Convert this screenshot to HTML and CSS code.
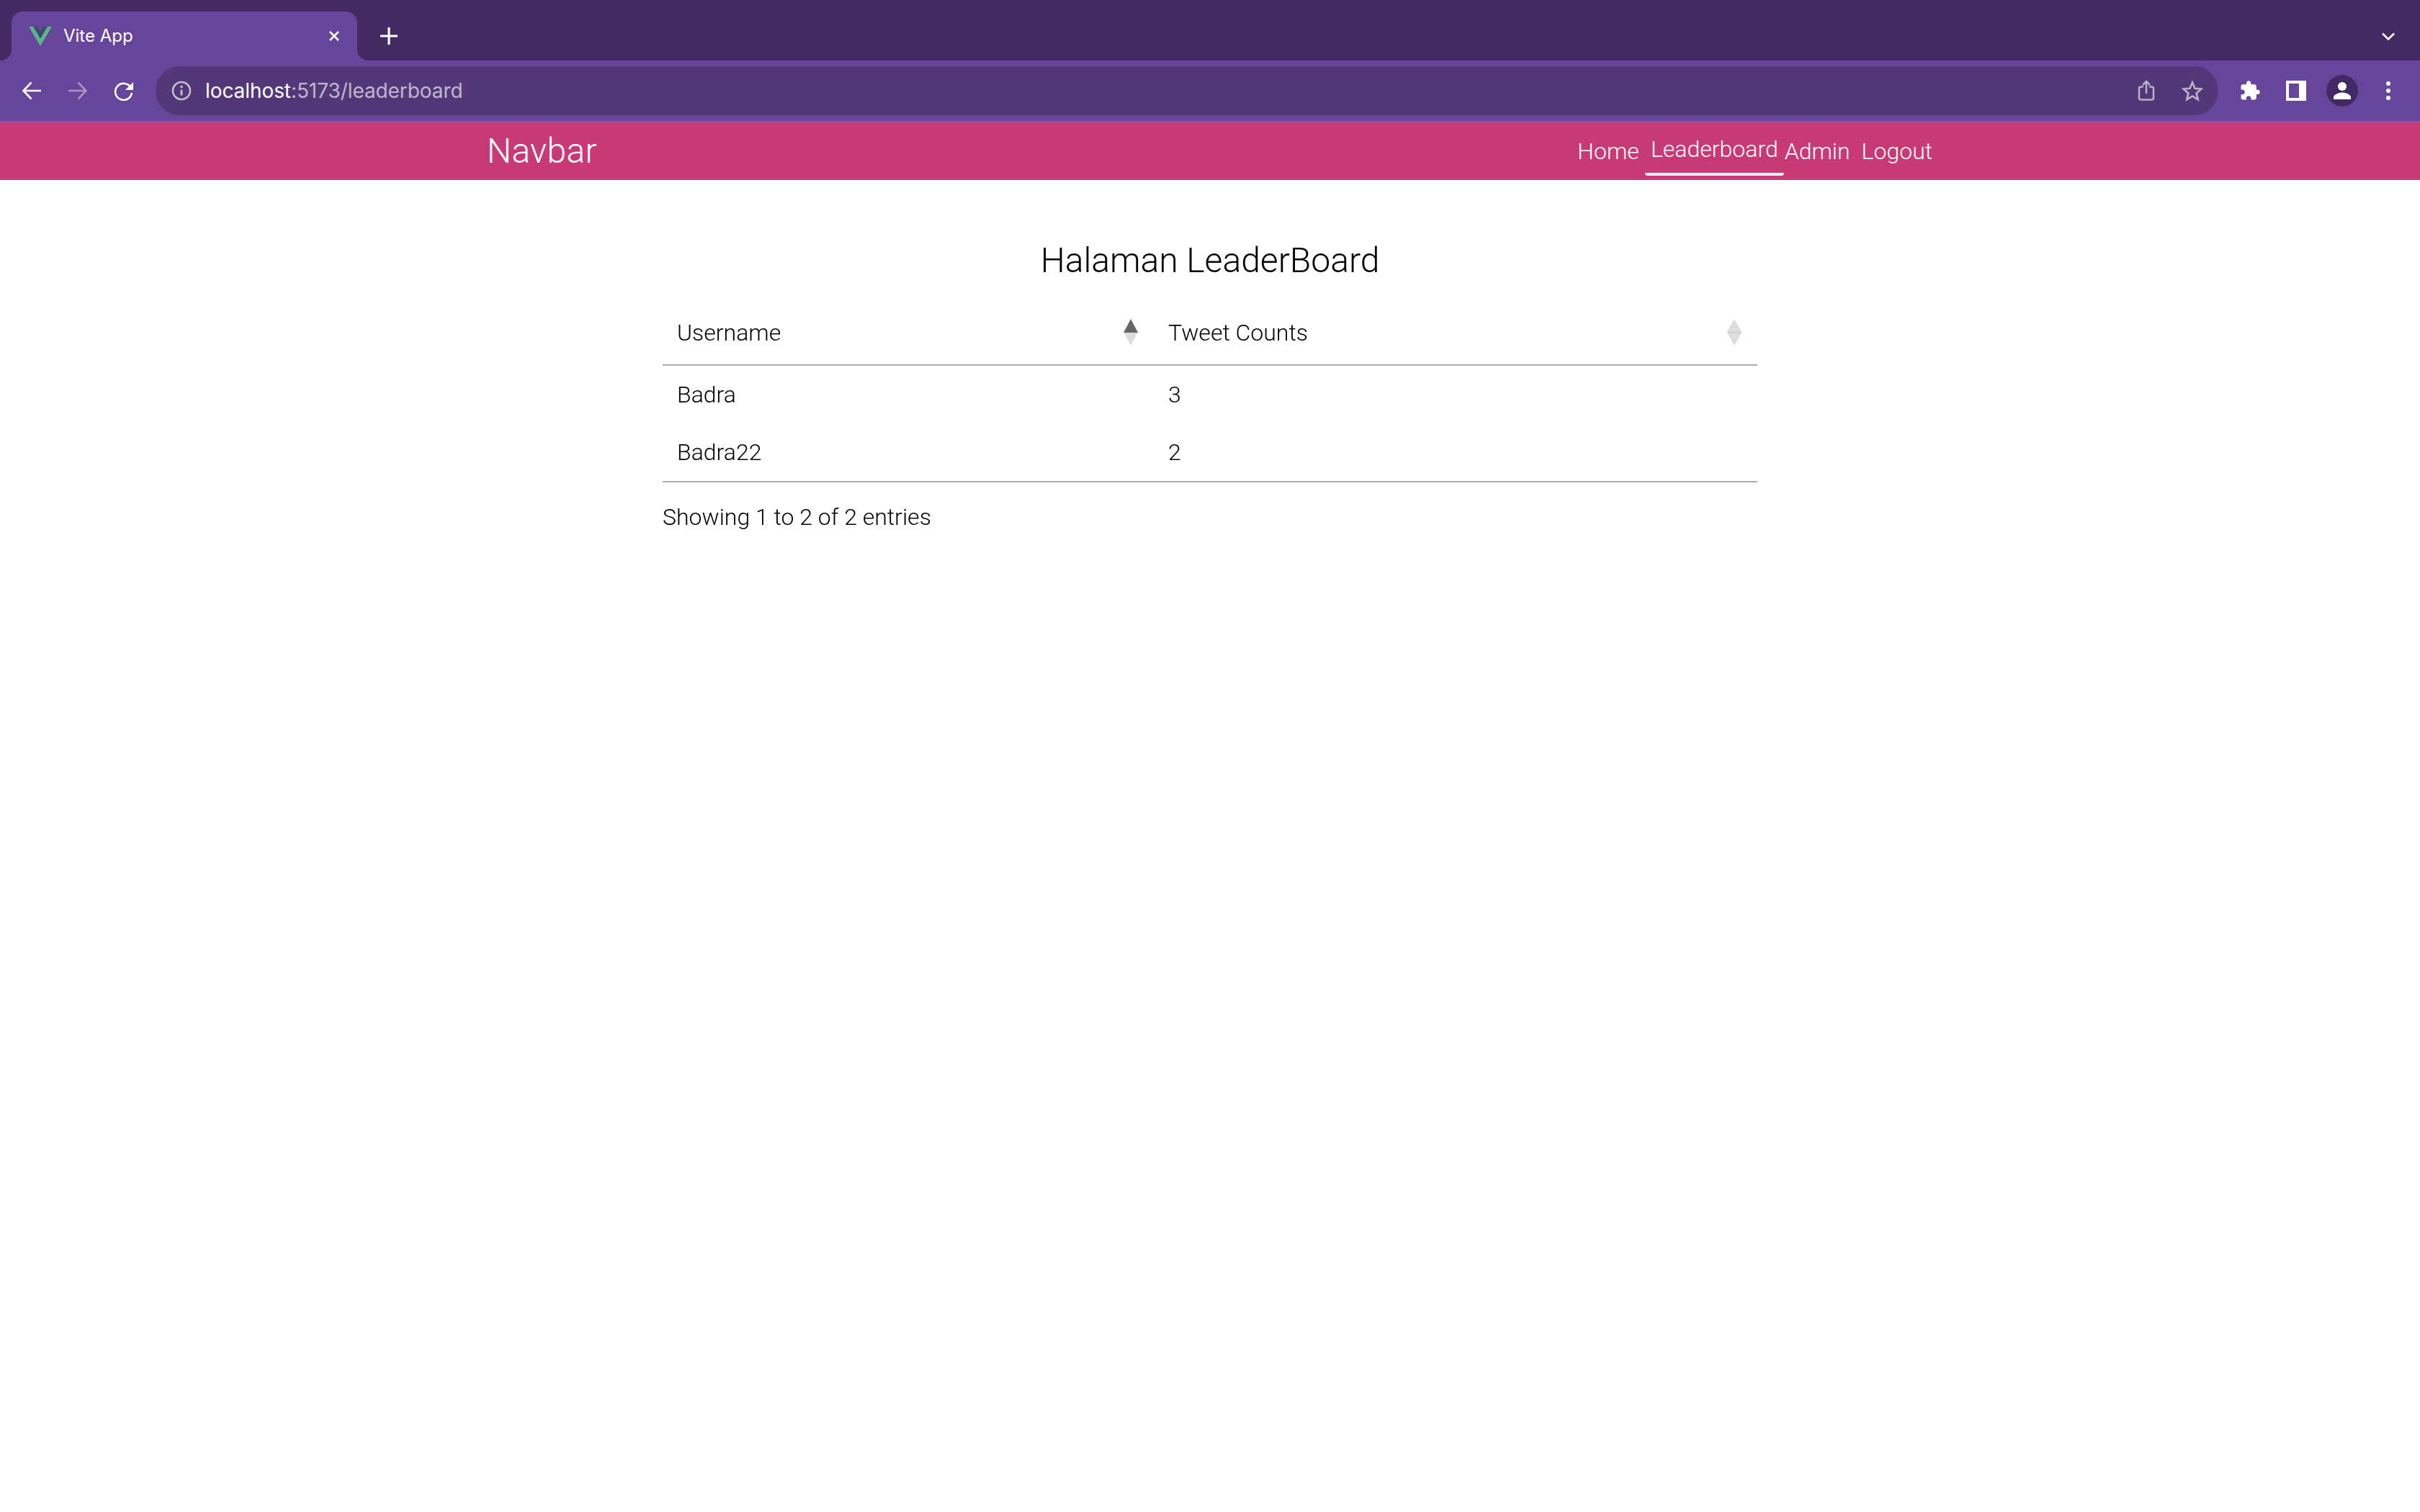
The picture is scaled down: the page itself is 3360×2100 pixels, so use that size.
FILE: index.html
```html
<!DOCTYPE html>
<html lang="en">
<head>
    <meta charset="UTF-8">
    <title>Vite App</title>
    <link rel="stylesheet" href="styles.css">
</head>
<body>
    <!-- Browser tab strip -->
    <div class="tabstrip">
        <div class="tab">
            <svg class="tab-logo" viewBox="0 0 32 27" width="32" height="27">
                <path fill="#5bb58a" d="M0 0h6.4L16 16.6 25.6 0H32L16 27z"/>
                <path fill="#3c4a6d" d="M6.4 0h5.8L16 6.6 19.8 0h5.8L16 16.6z"/>
            </svg>
            <span class="tab-title">Vite App</span>
            <svg class="tab-close" viewBox="0 0 16 16" width="16" height="16">
                <path d="M2 2l12 12M14 2L2 14" stroke="#fff" stroke-width="2.6" fill="none"/>
            </svg>
        </div>
        <svg class="new-tab" viewBox="0 0 24 24" width="24" height="24">
            <path d="M12 0v24M0 12h24" stroke="#fff" stroke-width="3.2" fill="none"/>
        </svg>
        <svg class="tab-menu" viewBox="0 0 18 11" width="18" height="11">
            <path d="M1 1.5l8 8 8-8" stroke="#fff" stroke-width="2.6" fill="none"/>
        </svg>
    </div>

    <!-- Browser toolbar -->
    <div class="toolbar">
        <div class="tool">
            <svg viewBox="0 0 28 26" width="28" height="26">
                <path d="M27 13H3M13.5 1.5L2.5 13l11 11.5" stroke="#fff" stroke-width="2.6" fill="none"/>
            </svg>
        </div>
        <div class="tool">
            <svg viewBox="0 0 28 26" width="28" height="26">
                <path d="M1 13h24M14.500 1.500L25.500 13l-11 11.500" stroke="#a994c8" stroke-width="2.6" fill="none"/>
            </svg>
        </div>
        <div class="tool">
            <svg viewBox="0 0 28 28" width="28" height="28">
                <path d="M23.500 9.500A11.500 11.500 0 1 0 25 17" stroke="#fff" stroke-width="2.6" fill="none"/>
                <path d="M27 2v11H16z" fill="#fff"/>
            </svg>
        </div>
        <div class="omnibox">
            <svg class="info-icon" viewBox="0 0 28 28" width="28" height="28">
                <circle cx="14" cy="14" r="12" stroke="#c3bdce" stroke-width="2.6" fill="none"/>
                <path d="M14 12.500v8" stroke="#c3bdce" stroke-width="2.8" fill="none"/>
                <circle cx="14" cy="8.500" r="1.800" fill="#c3bdce"/>
            </svg>
            <span class="url"><span class="url-host">localhost</span>:5173/leaderboard</span>
            <div class="tool">
                <svg viewBox="0 0 24 30" width="24" height="30">
                    <path d="M8 9.500H4.500a2.500 2.500 0 0 0-2.500 2.500v13a2.500 2.500 0 0 0 2.500 2.500h15a2.500 2.500 0 0 0 2.500-2.500V12a2.500 2.500 0 0 0-2.500-2.500H16M12 19V2.500M7 7l5-5 5 5" stroke="#b9b4c2" stroke-width="2.500" fill="none"/>
                </svg>
            </div>
            <div class="tool">
                <svg viewBox="0 0 30 30" width="30" height="30">
                    <path d="M15 3.500l3.500 8.300 9 .7-6.900 5.900 2.100 8.800-7.700-4.700-7.700 4.700 2.100-8.800-6.900-5.900 9-.7z" stroke="#b9b4c2" stroke-width="2.600" fill="none"/>
                </svg>
            </div>
            <span class="omnibox-end"></span>
        </div>
        <div class="tool">
            <svg viewBox="0 0 24 24" width="30" height="30">
                <path fill="#fff" d="M20.500 11H19V7c0-1.100-.9-2-2-2h-4V3.500C13 2.120 11.880 1 10.500 1S8 2.120 8 3.500V5H4c-1.100 0-1.990.9-1.990 2v3.800H3.500c1.490 0 2.700 1.210 2.700 2.700s-1.210 2.700-2.700 2.700H2V20c0 1.100.9 2 2 2h3.800v-1.500c0-1.490 1.210-2.700 2.700-2.700 1.490 0 2.700 1.210 2.700 2.700V22H17c1.100 0 2-.9 2-2v-4h1.500c1.380 0 2.500-1.120 2.500-2.500S21.880 11 20.500 11z"/>
            </svg>
        </div>
        <div class="tool">
            <svg viewBox="0 0 28 28" width="28" height="28">
                <path fill="#fff" fill-rule="evenodd" d="M0 0h28v28H0zM4 4v20h14V4z"/>
            </svg>
        </div>
        <div class="tool">
            <svg viewBox="0 0 44 44" width="44" height="44">
                <circle cx="22" cy="22" r="22" fill="#422b65"/>
                <circle cx="22" cy="16" r="6" fill="#fff"/>
                <path fill="#fff" d="M10 34v-3c0-4 8-6.500 12-6.500S34 27 34 31v3z"/>
            </svg>
        </div>
        <div class="tool">
            <svg viewBox="0 0 8 28" width="8" height="28">
                <circle cx="4" cy="4" r="3" fill="#fff"/>
                <circle cx="4" cy="14" r="3" fill="#fff"/>
                <circle cx="4" cy="24" r="3" fill="#fff"/>
            </svg>
        </div>
    </div>

    <!-- App navbar -->
    <nav class="navbar">
        <div class="navbar-inner">
            <a class="brand">Navbar</a>
            <div class="nav-links">
                <a class="nav-link">Home</a>
                <a class="nav-link active">Leaderboard</a>
                <a class="nav-link nav-link-admin">Admin</a>
                <a class="nav-link">Logout</a>
            </div>
        </div>
    </nav>

    <main class="page">
        <h1 class="page-title">Halaman LeaderBoard</h1>

        <table class="board">
            <thead>
                <tr>
                    <th class="col-user">
                        <div class="th-inner">
                            Username
                            <svg class="sort" viewBox="0 0 20 37" width="20" height="37">
                                <path fill="#ddd" d="M0 18h20L10 37z"/>
                                <path fill="#666" d="M10 0l10 19H0z"/>
                            </svg>
                        </div>
                    </th>
                    <th>
                        <div class="th-inner">
                            Tweet Counts
                            <svg class="sort" viewBox="0 0 20 37" width="20" height="37">
                                <path fill="#ddd" d="M0 19h20L10 37z"/>
                                <path fill="#ddd" d="M10 0l10 18H0z"/>
                                <path fill="#ccc" d="M0 18h20v1.500H0z"/>
                            </svg>
                        </div>
                    </th>
                </tr>
            </thead>
            <tbody>
                <tr>
                    <td>Badra</td>
                    <td>3</td>
                </tr>
                <tr>
                    <td>Badra22</td>
                    <td>2</td>
                </tr>
            </tbody>
        </table>

        <p class="table-info">Showing 1 to 2 of 2 entries</p>
    </main>
</body>
</html>
```

FILE: styles.css
```css
/* General Layout and Reset */
* {
    margin: 0;
    padding: 0;
    box-sizing: border-box;
}
body {
    font-family: 'Roboto', sans-serif;
    font-size: 32px;
    font-weight: 300;
    line-height: 48px;
    background-color: #fff;
    color: #000;
    overflow: hidden;
}

/* Browser chrome */
.tabstrip {
    display: flex;
    align-items: center;
    height: 84px;
    padding: 16px 35px 0 16px;
    background-color: #422b65;
    font-family: 'Inter', sans-serif;
    font-weight: 400;
}
.tab {
    display: flex;
    align-items: center;
    position: relative;
    width: 480px;
    height: 68px;
    padding: 0 24px;
    background-color: #67459b;
    border-radius: 16px 16px 0 0;
}
.tab::before, .tab::after {
    content: '';
    position: absolute;
    bottom: 0;
    width: 16px;
    height: 16px;
}
.tab::before {
    left: -16px;
    background: radial-gradient(circle at 0 0, transparent 16px, #67459b 16.5px);
}
.tab::after {
    right: -16px;
    background: radial-gradient(circle at 100% 0, transparent 16px, #67459b 16.5px);
}
.tab-title {
    margin-left: 16px;
    flex: 1;
    color: #fff;
    font-size: 24px;
    line-height: 32px;
}
.new-tab {
    margin-left: 32px;
}
.tab-menu {
    margin-left: auto;
}

.toolbar {
    display: flex;
    align-items: center;
    height: 86px;
    padding: 0 12px;
    background-color: #67459b;
    border-bottom: 2px solid #98529b;
}
.tool {
    display: flex;
    align-items: center;
    justify-content: center;
    flex: none;
    width: 64px;
    height: 64px;
}
.omnibox {
    display: flex;
    align-items: center;
    flex: 1;
    height: 68px;
    margin: 0 12px;
    padding-left: 22px;
    background-color: #523878;
    border-radius: 34px;
}
.omnibox-end {
    width: 4px;
}
.info-icon {
    flex: none;
}
.url {
    flex: 1;
    margin-left: 19px;
    color: #bfb7cd;
    font-family: 'Inter', sans-serif;
    font-weight: 400;
    font-size: 28px;
    letter-spacing: -0.08px;
}
.url-host {
    color: #fff;
}

/* Navbar */
.navbar {
    height: 80px;
    background-color: #c83a75;
    color: #fff;
}
.navbar-inner {
    display: flex;
    align-items: center;
    justify-content: space-between;
    max-width: 2040px;
    height: 100%;
    margin: 0 auto;
    padding: 0 9px 0 16px;
}
.brand {
    font-size: 48px;
    line-height: 60px;
    letter-spacing: 0.3px;
}
.nav-links {
    display: flex;
    align-items: center;
}
.nav-link {
    padding: 0 8px;
}
.nav-link.active {
    padding: 7px 8px 9px;
    border-bottom: 4px solid #fff;
    border-radius: 0 0 4px 4px;
}
.nav-link-admin {
    padding-left: 1px;
}

/* Leaderboard */
.page {
    width: 1520px;
    margin: 0 auto;
    padding-top: 83px;
    will-change: opacity;
}
.page-title {
    margin-bottom: 25px;
    font-size: 48px;
    font-weight: 300;
    line-height: 58px;
    text-align: center;
}
.board {
    width: 100%;
    table-layout: fixed;
    border-spacing: 0;
}
.col-user {
    width: 682px;
}
.board th {
    height: 92px;
    padding: 1px 22px 0 20px;
    font-weight: 300;
    text-align: left;
    border-bottom: 2px solid #aaa;
}
.th-inner {
    display: flex;
    align-items: center;
    justify-content: space-between;
}
.board td {
    height: 80px;
    padding: 0 20px;
}
.board tbody tr:last-child td {
    height: 82px;
    border-bottom: 2px solid #aaa;
}
.table-info {
    margin-top: 24px;
}
```
